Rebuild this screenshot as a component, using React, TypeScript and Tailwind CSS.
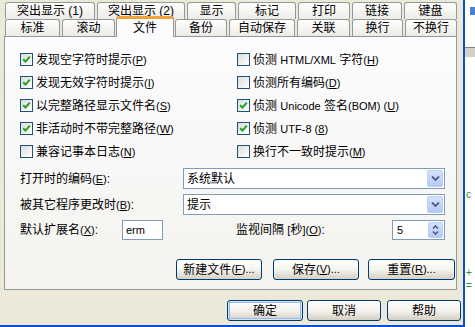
import React from "react";

// mnemonic in parentheses, Latin part a touch smaller like Tahoma 8pt
const M = ({ c }: { c: string }) => (
  <span className="text-[11px]">
    (<span className="underline">{c}</span>)
  </span>
);
const L = ({ children }: { children: React.ReactNode }) => <span className="text-[11px]">{children}</span>;

function Check({ on }: { on?: boolean }) {
  return (
    <span className="flex h-[13px] w-[13px] shrink-0 items-center justify-center border border-[#1c5180] bg-linear-to-br from-[#dcdcd7] to-white">
      {on && (
        <svg width="9" height="9" viewBox="0 0 9 9">
          <path d="M1.2 4.2 L3.5 6.6 L7.8 1.6" fill="none" stroke="#21a121" strokeWidth="2" />
        </svg>
      )}
    </span>
  );
}

function CheckRow({ on, children }: { on?: boolean; children: React.ReactNode }) {
  return (
    <div className="flex h-[23px] items-center gap-[3px]">
      <Check on={on} />
      <span className="whitespace-nowrap">{children}</span>
    </div>
  );
}

function Tab({ label, className }: { label: string; className: string }) {
  return (
    <div
      className={`flex items-center justify-center rounded-t-[3px] border border-b-0 border-[#919b9c] bg-linear-to-b from-white to-[#ecebe6] ${className}`}
    >
      {label}
    </div>
  );
}

function Chevron() {
  return (
    <svg width="9" height="7" viewBox="0 0 9 7">
      <path d="M1 1.5 L4.5 5 L8 1.5" fill="none" stroke="#4d6185" strokeWidth="1.8" />
    </svg>
  );
}

function Combo({ value }: { value: string }) {
  return (
    <div className="flex h-[21px] w-[262px] items-center border border-[#7f9db9] bg-white pl-[3px]">
      <span className="flex-1">{value}</span>
      <span className="mr-[1px] flex h-[17px] w-[16px] items-center justify-center rounded-[2px] border border-[#b9cdf7] bg-linear-to-b from-[#d6e2fc] to-[#b4c8f6]">
        <Chevron />
      </span>
    </div>
  );
}

function Btn({ children, className = "", def }: { children: React.ReactNode; className?: string; def?: boolean }) {
  return (
    <div
      className={`flex h-[21px] items-center justify-center rounded-[3px] border border-[#003c74] bg-linear-to-b from-white via-[#f4f3ee] to-[#d6d0c5] ${
        def ? "shadow-[inset_0_0_0_1px_#cee7ff,inset_0_0_0_2px_#98b8ea]" : ""
      } ${className}`}
    >
      {children}
    </div>
  );
}

export default function App() {
  return (
    <div className="flex h-[327px] w-[475px] overflow-hidden bg-white font-['Liberation_Sans','Noto_Sans_CJK_SC',sans-serif] text-[12px] leading-none text-black">
      <div className="flex w-[463px] flex-col">
        <div className="flex h-[325px] flex-col bg-[#ece9d8] pt-[2px]">
          {/* back tab row */}
          <div className="flex h-[17px] gap-[2px] pl-[5px]">
            <Tab label="突出显示 (1)" className="w-[90px]" />
            <Tab label="突出显示 (2)" className="w-[88px]" />
            <Tab label="显示" className="w-[49px]" />
            <Tab label="标记" className="w-[58px]" />
            <Tab label="打印" className="w-[52px]" />
            <Tab label="链接" className="w-[50px]" />
            <Tab label="键盘" className="w-[53px]" />
          </div>
          {/* front tab row */}
          <div className="flex h-[17px] items-end gap-[2px] pl-[5px]">
            <Tab label="标准" className="h-[17px] w-[55px]" />
            <Tab label="滚动" className="h-[17px] w-[53px]" />
            <div className="relative z-10 -mb-[1px] flex h-[21px] w-[58px] -mx-[1px] items-center justify-center rounded-t-[3px] border-x border-t-[3px] border-x-[#919b9c] border-t-[#f0a23b] bg-[#fcfcfe] pb-[1px]">
              文件
            </div>
            <Tab label="备份" className="h-[17px] w-[52px]" />
            <Tab label="自动保存" className="h-[17px] w-[66px]" />
            <Tab label="关联" className="h-[17px] w-[53px]" />
            <Tab label="换行" className="h-[17px] w-[51px]" />
            <Tab label="不换行" className="h-[17px] w-[52px]" />
          </div>
          {/* panel */}
          <div className="ml-[4px] flex h-[254px] w-[453px] flex-col border border-[#919b9c] bg-linear-to-b from-[#fcfcfe] to-[#f4f3ee] pl-[15px] pt-[11px]">
            <div className="grid grid-cols-[217px_1fr]">
              <div className="flex flex-col">
                <CheckRow on>发现空字符时提示<M c="P" /></CheckRow>
                <CheckRow on>发现无效字符时提示<M c="I" /></CheckRow>
                <CheckRow on>以完整路径显示文件名<M c="S" /></CheckRow>
                <CheckRow on>非活动时不带完整路径<M c="W" /></CheckRow>
                <CheckRow>兼容记事本日志<M c="N" /></CheckRow>
              </div>
              <div className="flex flex-col">
                <CheckRow>侦测 <L>HTML/XML</L> 字符<M c="H" /></CheckRow>
                <CheckRow>侦测所有编码<M c="D" /></CheckRow>
                <CheckRow on>侦测 <L>Unicode</L> 签名<L>(BOM) </L><M c="U" /></CheckRow>
                <CheckRow on>侦测 <L>UTF-8 </L><M c="8" /></CheckRow>
                <CheckRow>换行不一致时提示<M c="M" /></CheckRow>
              </div>
            </div>

            <div className="mt-[5px] flex flex-col gap-[5px]">
              <div className="flex items-center">
                <span className="w-[163px]">打开时的编码<M c="E" />:</span>
                <Combo value="系统默认" />
              </div>
              <div className="flex items-center">
                <span className="w-[163px]">被其它程序更改时<M c="B" />:</span>
                <Combo value="提示" />
              </div>
              <div className="flex items-center">
                <span className="w-[102px]">默认扩展名<M c="X" />:</span>
                <div className="flex h-[20px] w-[41px] items-center border border-[#7f9db9] bg-white pl-[3px] text-[11px]">erm</div>
                <span className="ml-[73px] w-[156px]">监视间隔 <L>[</L>秒<L>]</L><M c="O" />:</span>
                <div className="flex h-[20px] w-[53px] items-center border border-[#7f9db9] bg-white pl-[4px] text-[11px]">
                  <span className="flex-1">5</span>
                  <span className="mr-[1px] flex h-[16px] w-[15px] flex-col items-center justify-center rounded-[2px] border border-[#b9cdf7] bg-linear-to-b from-[#d6e2fc] to-[#b4c8f6]">
                    <svg width="7" height="12" viewBox="0 0 7 12">
                      <path d="M1 4.5 L3.5 2 L6 4.5 M1 7.5 L3.5 10 L6 7.5" fill="none" stroke="#4d6185" strokeWidth="1.6" />
                    </svg>
                  </span>
                </div>
              </div>
            </div>

            <div className="mt-[19px] flex">
              <Btn className="ml-[156px] w-[86px]">新建文件<M c="F" /><L>...</L></Btn>
              <Btn className="ml-[11px] w-[86px]">保存<M c="V" /><L>...</L></Btn>
              <Btn className="ml-[9px] w-[87px]">重置<M c="R" /><L>...</L></Btn>
            </div>
          </div>

          <div className="mt-[10px] flex">
            <Btn def className="ml-[227px] w-[76px]">确定</Btn>
            <Btn className="ml-[4px] w-[74px]">取消</Btn>
            <Btn className="ml-[6px] w-[74px]">帮助</Btn>
          </div>
        </div>
        <div className="h-[2px] bg-[#0a4fd8]" />
      </div>
      <div className="w-[2px] bg-[#0a4fd8]" />
      <div className="flex flex-1 flex-col bg-white">
        <div className="mt-[7px] ml-[5px] h-[8px] w-[5px] bg-[#4a7ed8]" />
        <div className="mt-[32px] h-[10px] border-t border-[#808080] bg-[#d4d0c8]" />
        <div className="mt-[133px] pl-[1px] text-[10px] text-[#2a8a2a]">c</div>
        <div className="mt-[68px] pl-[1px] text-[10px] text-[#2a8a2a]">+</div>
        <div className="mt-[3px] pl-[1px] text-[10px] text-[#2a8a2a]">=</div>
      </div>
    </div>
  );
}
